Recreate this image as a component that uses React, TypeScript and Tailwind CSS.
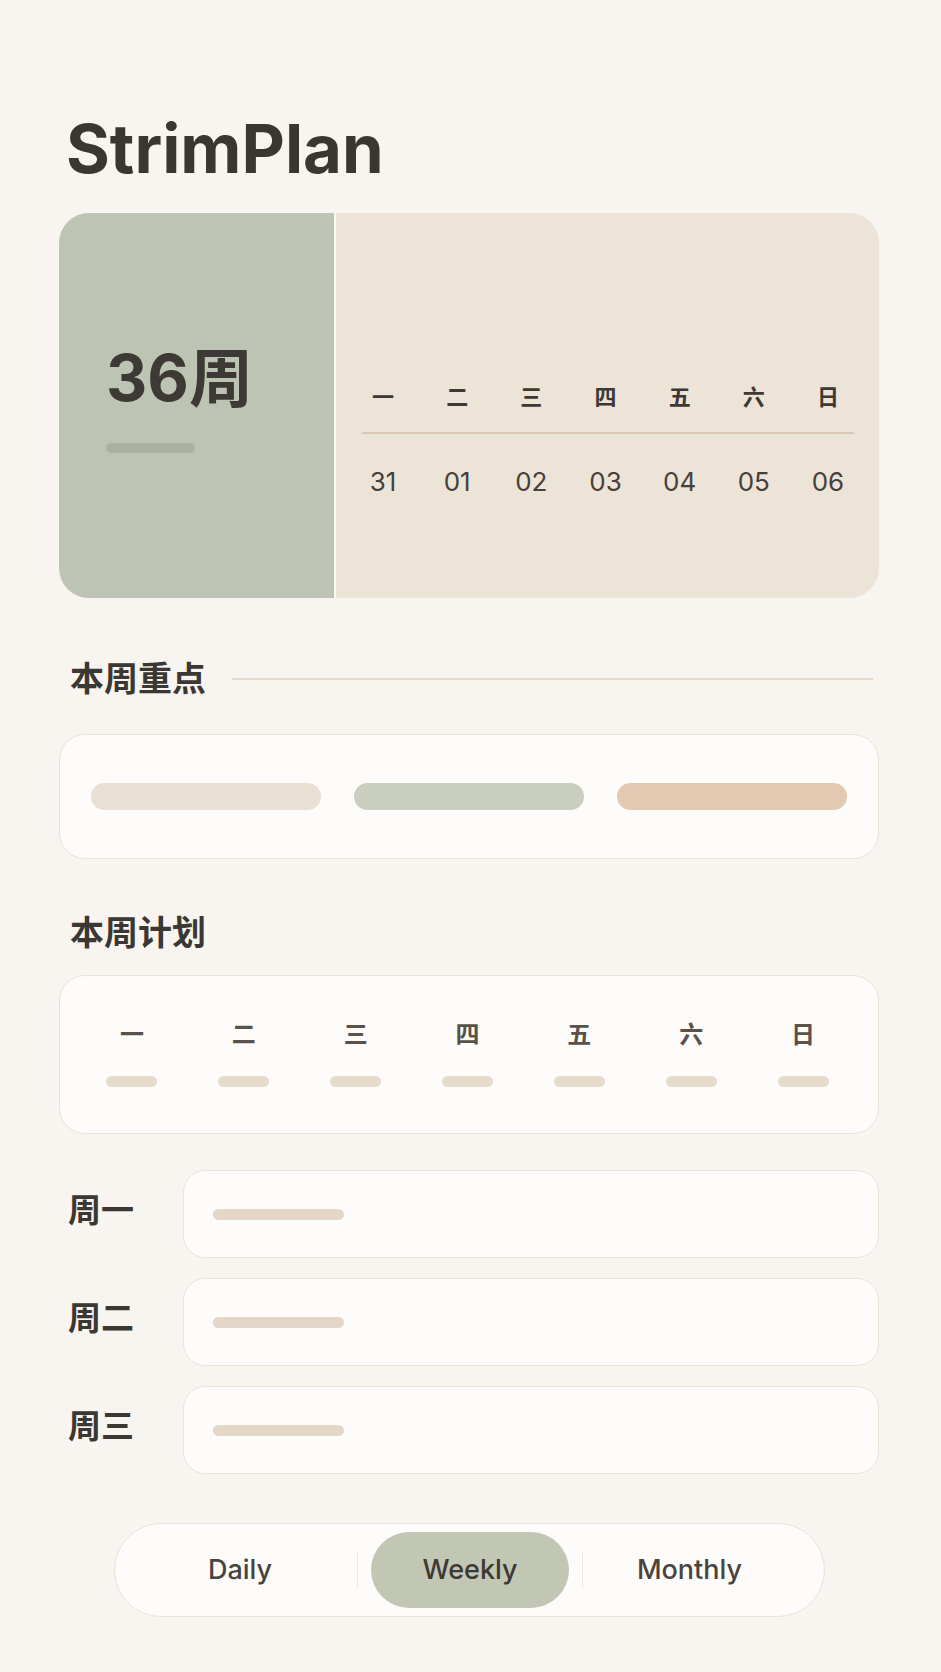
const days = ["一", "二", "三", "四", "五", "六", "日"];
const dates = ["31", "01", "02", "03", "04", "05", "06"];
const rows = ["周一", "周二", "周三"];

const font = "font-['Inter','Noto_Sans_CJK_SC',sans-serif]";

const App = () => {
  return (
    <div className={`min-h-[1672px] w-[941px] bg-[#f8f5f0] pl-[59px] pr-[62px] pt-[115px] pb-[54px] text-[#3b3733] ${font}`}>
      <h1 className="pl-[7px] text-[67px] font-bold leading-none text-[#3a3632]">StrimPlan</h1>

      {/* week header card */}
      <div className="mt-[31px] flex h-[385px] overflow-hidden rounded-[30px]">
        <div className="w-[275px] shrink-0 bg-[#bec4b3] pl-[47px] pt-[133px]">
          <div className="text-[64px] font-bold leading-none text-[#3d3a35]">36周</div>
          <div className="mt-[33px] h-[10px] w-[89px] rounded-full bg-[#a9b19f]"></div>
        </div>
        <div className="w-[2px] shrink-0 bg-[#faf8f4]"></div>
        <div className="flex-1 bg-[#ede4d8] pt-[173px]">
          <div className="ml-[10px] mr-[14px] grid grid-cols-7">
            {days.map((d) => (
              <div key={d} className="text-center text-[22px] font-bold leading-none text-[#3d3833]">
                {d}
              </div>
            ))}
          </div>
          <div className="ml-[26px] mr-[25px] mt-[24px] h-[2px] bg-[#dac7b6]"></div>
          <div className="ml-[10px] mr-[14px] mt-[35px] grid grid-cols-7">
            {dates.map((d) => (
              <div key={d} className="text-center text-[26px] font-normal leading-none text-[#46403b]">
                {d}
              </div>
            ))}
          </div>
        </div>
      </div>

      {/* focus */}
      <div className="mt-[64px] flex items-center">
        <h2 className="pl-[11px] text-[34px] font-bold leading-none text-[#3b3733]">本周重点</h2>
        <div className="ml-[26px] mr-[6px] h-[2px] flex-1 bg-[#e6d8cb]"></div>
      </div>
      <div className="mt-[38px] grid h-[125px] grid-cols-3 items-center gap-[33px] rounded-[26px] border-[1.5px] border-[#ece2d7] bg-[#fdfcfa] px-[31px]">
        <div className="h-[27px] rounded-full bg-[#e9dfd2]"></div>
        <div className="h-[27px] rounded-full bg-[#c9cebe]"></div>
        <div className="h-[27px] rounded-full bg-[#e3c9b1]"></div>
      </div>

      {/* plan */}
      <h2 className="mt-[57px] pl-[11px] text-[34px] font-bold leading-none text-[#3b3733]">本周计划</h2>
      <div className="mt-[25px] h-[159px] rounded-[26px] border-[1.5px] border-[#ece2d7] bg-[#fdfcfa] pl-[16px] pr-[19px] pt-[47px]">
        <div className="grid grid-cols-7">
          {days.map((d) => (
            <div key={d} className="flex flex-col items-center">
              <div className="text-[24px] font-bold leading-none text-[#5a514a]">{d}</div>
              <div className="mt-[29px] h-[11px] w-[51px] rounded-full bg-[#e6dacb]"></div>
            </div>
          ))}
        </div>
      </div>

      <div className="mt-[36px] flex flex-col gap-[20px]">
        {rows.map((r) => (
          <div key={r} className="flex items-center">
            <div className="w-[124px] shrink-0 pb-[8px] pl-[9px] text-[33px] font-bold leading-none text-[#3b3733]">{r}</div>
            <div className="flex h-[88px] flex-1 items-center rounded-[22px] border-[1.5px] border-[#ece2d7] bg-[#fdfcfa] pl-[29px]">
              <div className="h-[11px] w-[131px] rounded-full bg-[#e4d7c7]"></div>
            </div>
          </div>
        ))}
      </div>

      {/* switcher */}
      <div className="ml-[55px] mt-[49px] flex h-[94px] w-[711px] items-center rounded-full border-[1.5px] border-[#ebe2d7] bg-[#fdfcfa]">
        <div className="flex w-[242px] justify-center pl-[8px] text-[27px] font-medium text-[#4a433d]">Daily</div>
        <div className="h-[36px] w-px bg-[#efe8df]"></div>
        <div className="flex w-[224px] px-[13px]">
          <div className="flex h-[76px] flex-1 items-center justify-center rounded-full bg-[#c2c7b4] text-[27px] font-medium text-[#3d3833]">
            Weekly
          </div>
        </div>
        <div className="h-[36px] w-px bg-[#efe8df]"></div>
        <div className="flex flex-1 justify-center pr-[28px] text-[27px] font-medium text-[#4a433d]">Monthly</div>
      </div>
    </div>
  );
};

export default App;
